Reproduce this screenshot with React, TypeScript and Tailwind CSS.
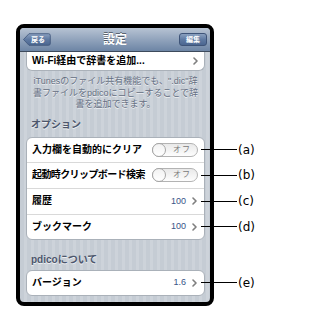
import React from "react";

const Chevron = () => (
  <svg width="5" height="8" viewBox="0 0 5 8" className="shrink-0">
    <polyline points="1,1 4,4 1,7" fill="none" stroke="#7f7f7f" strokeWidth="1.6" strokeLinecap="round" strokeLinejoin="round" />
  </svg>
);

const Callout = ({ label }: { label: string }) => (
  <div className="absolute left-[174px] top-1/2 -translate-y-1/2 flex items-center">
    <div className="w-[36px] h-px bg-black" />
    <span className="ml-px text-[12px] leading-[14px] text-black font-['DejaVu_Sans',sans-serif]">{label}</span>
  </div>
);

const Toggle = () => (
  <div className="relative w-[46px] h-[14px] rounded-full border border-[#b3b3b3] bg-gradient-to-b from-[#e9e9e9] to-[#fdfdfd] flex items-center">
    <div className="absolute -left-px -top-px w-[14px] h-[14px] rounded-full border border-[#a6a6a6] bg-gradient-to-b from-[#f2f2f2] to-white" />
    <span className="ml-[20px] text-[8px] leading-none text-[#7a7a7a] tracking-[1px]">オフ</span>
  </div>
);

export default function App() {
  return (
    <div className="w-[257px] h-[331px] bg-white overflow-hidden font-['Liberation_Sans','Noto_Sans_CJK_JP',sans-serif]">
      <div className="ml-[16px] mt-[24px] w-[198px] h-[282px] border-[4px] border-black rounded-[8px] bg-[repeating-linear-gradient(90deg,#c5ccd4_0px,#c5ccd4_4px,#cdd3da_4px,#cdd3da_7px)]">
        {/* nav bar */}
        <div className="relative h-[24px] rounded-t-[4px] bg-gradient-to-b from-[#b7c3d3] to-[#6d85a5] border-b border-[#3d4a5c] flex items-center justify-between px-[3px]">
          <div className="relative w-[28px] h-[13px]">
            <svg width="28" height="13" viewBox="0 0 28 13" className="absolute inset-0">
              <defs>
                <linearGradient id="bb" x1="0" y1="0" x2="0" y2="1">
                  <stop offset="0" stopColor="#8aa0bf" />
                  <stop offset="0.5" stopColor="#5f7aa2" />
                  <stop offset="1" stopColor="#4b6690" />
                </linearGradient>
              </defs>
              <path d="M0.5,6.5 L6,0.7 L25.5,0.7 Q27.3,0.7 27.3,2.5 L27.3,10.5 Q27.3,12.3 25.5,12.3 L6,12.3 Z" fill="url(#bb)" stroke="#3e5478" strokeWidth="0.8" />
            </svg>
            <span className="absolute left-[8px] top-0 h-[13px] flex items-center text-[7px] font-bold text-white leading-none">戻る</span>
          </div>
          <span className="absolute left-1/2 -translate-x-1/2 text-[12px] font-bold text-white leading-none [text-shadow:0_-1px_0_rgba(0,0,0,0.45)]">設定</span>
          <div className="w-[28px] h-[13px] rounded-[3px] border border-[#3e5478] bg-gradient-to-b from-[#8aa0bf] via-[#5f7aa2] to-[#4b6690] flex items-center justify-center">
            <span className="text-[7px] font-bold text-white leading-none">編集</span>
          </div>
        </div>

        {/* scrolled Wi-Fi row */}
        <div className="ml-[6px] mr-[5px] h-[19px] bg-white border-x border-b border-[#aab1b9] rounded-b-[6px] flex items-center justify-between pl-[5px] pr-[6px]">
          <span className="text-[10px] font-bold text-black leading-none">Wi-Fi経由で辞書を追加...</span>
          <Chevron />
        </div>

        {/* footer text */}
        <div className="mt-[5px] ml-[6px] mr-[5px] text-center text-[9px] leading-[11.5px] text-[#656f82] [text-shadow:0_1px_0_rgba(255,255,255,0.7)]">
          <div>iTunesのファイル共有機能でも、".dic"辞</div>
          <div>書ファイルをpdicoにコピーすることで辞</div>
          <div>書を追加できます。</div>
        </div>

        {/* options header */}
        <div className="mt-[8px] ml-[11px] h-[12px] text-[10px] leading-[12px] font-bold text-[#4c566c] [text-shadow:0_1px_0_rgba(255,255,255,0.7)]">
          オプション
        </div>

        {/* options group */}
        <div className="mt-[6px] ml-[6px] mr-[5px] bg-white border border-[#aab1b9] rounded-[6px]">
          <div className="relative h-[25px] flex items-center justify-between pl-[5px] pr-[6px] border-b border-[#d9d9d9]">
            <span className="text-[10px] font-bold text-black leading-none">入力欄を自動的にクリア</span>
            <Toggle />
            <Callout label="(a)" />
          </div>
          <div className="relative h-[26px] flex items-center justify-between pl-[5px] pr-[6px] border-b border-[#d9d9d9]">
            <span className="text-[10px] font-bold text-black leading-none tracking-[-0.6px]">起動時クリップボード検索</span>
            <Toggle />
            <Callout label="(b)" />
          </div>
          <div className="relative h-[26px] flex items-center justify-between pl-[5px] pr-[7px] border-b border-[#d9d9d9]">
            <span className="text-[10px] font-bold text-black leading-none">履歴</span>
            <div className="flex items-center gap-[6px]">
              <span className="text-[9px] text-[#385487] leading-none">100</span>
              <Chevron />
            </div>
            <Callout label="(c)" />
          </div>
          <div className="relative h-[24px] flex items-center justify-between pl-[5px] pr-[7px]">
            <span className="text-[10px] font-bold text-black leading-none">ブックマーク</span>
            <div className="flex items-center gap-[6px]">
              <span className="text-[9px] text-[#385487] leading-none">100</span>
              <Chevron />
            </div>
            <Callout label="(d)" />
          </div>
        </div>

        {/* about header */}
        <div className="mt-[14px] ml-[11px] h-[12px] text-[10px] leading-[12px] font-bold text-[#4c566c] [text-shadow:0_1px_0_rgba(255,255,255,0.7)]">
          pdicoについて
        </div>

        {/* version group */}
        <div className="mt-[4px] ml-[6px] mr-[5px] bg-white border border-[#aab1b9] rounded-[6px]">
          <div className="relative h-[24px] flex items-center justify-between pl-[5px] pr-[7px]">
            <span className="text-[10px] font-bold text-black leading-none">バージョン</span>
            <div className="flex items-center gap-[6px]">
              <span className="text-[9px] text-[#385487] leading-none">1.6</span>
              <Chevron />
            </div>
            <Callout label="(e)" />
          </div>
        </div>
      </div>
    </div>
  );
}
